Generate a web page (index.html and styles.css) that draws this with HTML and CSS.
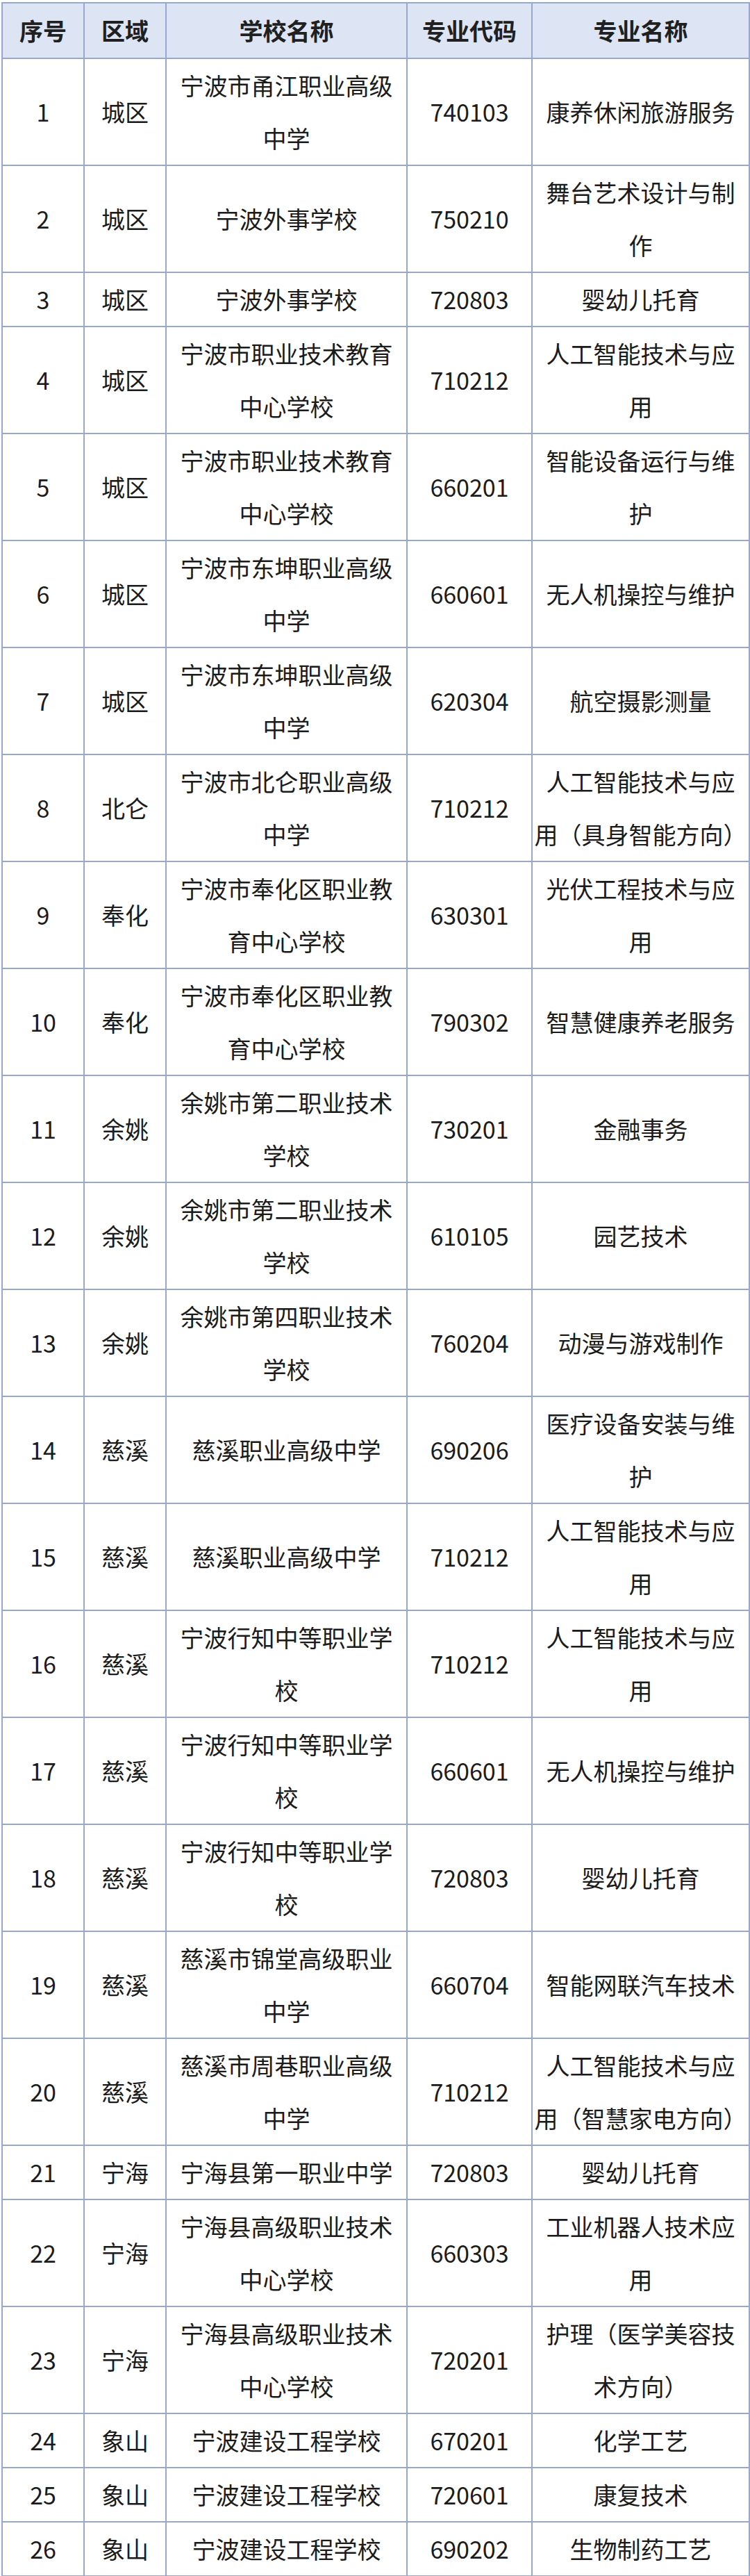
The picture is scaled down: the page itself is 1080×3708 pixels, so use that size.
FILE: index.html
```html
<!DOCTYPE html>
<html lang="zh-CN">
<head>
<meta charset="utf-8">
<title>专业列表</title>
<link rel="stylesheet" href="styles.css">
</head>
<body>
<table class="list">
  <colgroup>
    <col class="c-no">
    <col class="c-area">
    <col class="c-school">
    <col class="c-code">
    <col class="c-major">
  </colgroup>
  <thead>
    <tr><th>序号</th><th>区域</th><th>学校名称</th><th>专业代码</th><th>专业名称</th></tr>
  </thead>
  <tbody>
    <tr><td>1</td><td>城区</td><td class="school">宁波市甬江职业高级<br>中学</td><td>740103</td><td class="major">康养休闲旅游服务</td></tr>
    <tr><td>2</td><td>城区</td><td class="school">宁波外事学校</td><td>750210</td><td class="major">舞台艺术设计与制<br>作</td></tr>
    <tr><td>3</td><td>城区</td><td class="school">宁波外事学校</td><td>720803</td><td class="major">婴幼儿托育</td></tr>
    <tr><td>4</td><td>城区</td><td class="school">宁波市职业技术教育<br>中心学校</td><td>710212</td><td class="major">人工智能技术与应<br>用</td></tr>
    <tr><td>5</td><td>城区</td><td class="school">宁波市职业技术教育<br>中心学校</td><td>660201</td><td class="major">智能设备运行与维<br>护</td></tr>
    <tr><td>6</td><td>城区</td><td class="school">宁波市东坤职业高级<br>中学</td><td>660601</td><td class="major">无人机操控与维护</td></tr>
    <tr><td>7</td><td>城区</td><td class="school">宁波市东坤职业高级<br>中学</td><td>620304</td><td class="major">航空摄影测量</td></tr>
    <tr><td>8</td><td>北仑</td><td class="school">宁波市北仑职业高级<br>中学</td><td>710212</td><td class="major">人工智能技术与应<br>用（具身智能方向）</td></tr>
    <tr><td>9</td><td>奉化</td><td class="school">宁波市奉化区职业教<br>育中心学校</td><td>630301</td><td class="major">光伏工程技术与应<br>用</td></tr>
    <tr><td>10</td><td>奉化</td><td class="school">宁波市奉化区职业教<br>育中心学校</td><td>790302</td><td class="major">智慧健康养老服务</td></tr>
    <tr><td>11</td><td>余姚</td><td class="school">余姚市第二职业技术<br>学校</td><td>730201</td><td class="major">金融事务</td></tr>
    <tr><td>12</td><td>余姚</td><td class="school">余姚市第二职业技术<br>学校</td><td>610105</td><td class="major">园艺技术</td></tr>
    <tr><td>13</td><td>余姚</td><td class="school">余姚市第四职业技术<br>学校</td><td>760204</td><td class="major">动漫与游戏制作</td></tr>
    <tr><td>14</td><td>慈溪</td><td class="school">慈溪职业高级中学</td><td>690206</td><td class="major">医疗设备安装与维<br>护</td></tr>
    <tr><td>15</td><td>慈溪</td><td class="school">慈溪职业高级中学</td><td>710212</td><td class="major">人工智能技术与应<br>用</td></tr>
    <tr><td>16</td><td>慈溪</td><td class="school">宁波行知中等职业学<br>校</td><td>710212</td><td class="major">人工智能技术与应<br>用</td></tr>
    <tr><td>17</td><td>慈溪</td><td class="school">宁波行知中等职业学<br>校</td><td>660601</td><td class="major">无人机操控与维护</td></tr>
    <tr><td>18</td><td>慈溪</td><td class="school">宁波行知中等职业学<br>校</td><td>720803</td><td class="major">婴幼儿托育</td></tr>
    <tr><td>19</td><td>慈溪</td><td class="school">慈溪市锦堂高级职业<br>中学</td><td>660704</td><td class="major">智能网联汽车技术</td></tr>
    <tr><td>20</td><td>慈溪</td><td class="school">慈溪市周巷职业高级<br>中学</td><td>710212</td><td class="major">人工智能技术与应<br>用（智慧家电方向）</td></tr>
    <tr><td>21</td><td>宁海</td><td class="school">宁海县第一职业中学</td><td>720803</td><td class="major">婴幼儿托育</td></tr>
    <tr><td>22</td><td>宁海</td><td class="school">宁海县高级职业技术<br>中心学校</td><td>660303</td><td class="major">工业机器人技术应<br>用</td></tr>
    <tr><td>23</td><td>宁海</td><td class="school">宁海县高级职业技术<br>中心学校</td><td>720201</td><td class="major">护理（医学美容技<br>术方向）</td></tr>
    <tr><td>24</td><td>象山</td><td class="school">宁波建设工程学校</td><td>670201</td><td class="major">化学工艺</td></tr>
    <tr><td>25</td><td>象山</td><td class="school">宁波建设工程学校</td><td>720601</td><td class="major">康复技术</td></tr>
    <tr><td>26</td><td>象山</td><td class="school">宁波建设工程学校</td><td>690202</td><td class="major">生物制药工艺</td></tr>
  </tbody>
</table>
</body>
</html>
```
FILE: styles.css
```css
html, body {
  margin: 0;
  padding: 0;
  background: #ffffff;
}

body {
  padding: 3px 2px 0 2px;
  font-family: "Noto Sans CJK SC", "Noto Sans", sans-serif;
  color: #1b1b1b;
}

.list {
  width: 1076px;
  table-layout: fixed;
  border-collapse: collapse;
  font-size: 34px;
}

.c-no { width: 118px; }
.c-area { width: 118px; }
.c-school { width: 347px; }
.c-code { width: 180px; }
.c-major { width: 313px; }

.list th,
.list td {
  border: 2px solid #97a7cf;
  text-align: center;
  vertical-align: middle;
  padding: 0 2px;
  line-height: 76px;
  white-space: nowrap;
}

.list th {
  background: #dde4f4;
  font-weight: 700;
  line-height: 78px;
  color: #202020;
}
```
